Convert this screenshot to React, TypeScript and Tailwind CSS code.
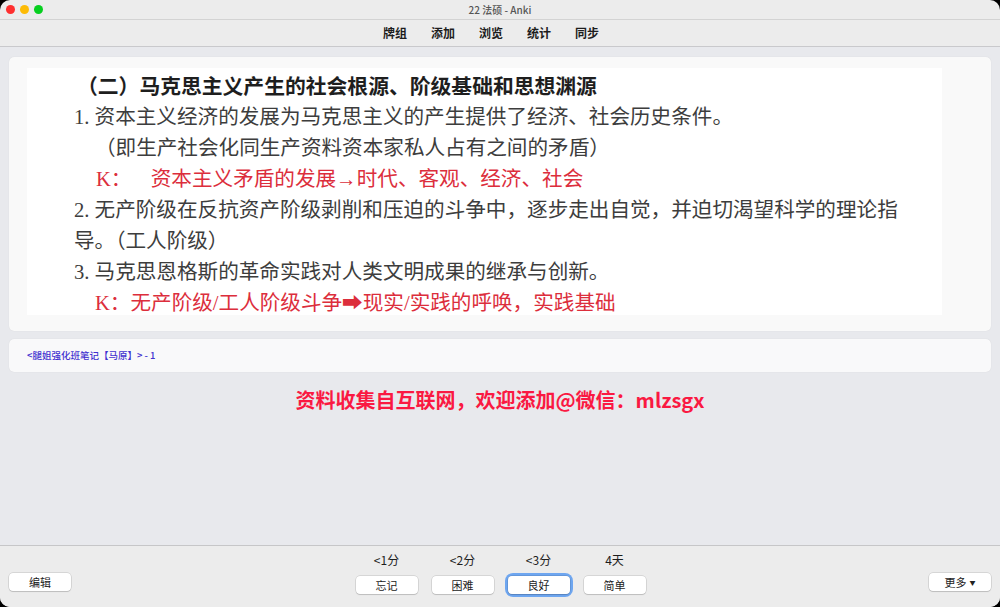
const sans = { fontFamily: '"Noto Sans CJK SC", "Noto Sans", sans-serif' };

const navItems = ["牌组", "添加", "浏览", "统计", "同步"];

const answers = [
  { due: "<1分", label: "忘记" },
  { due: "<2分", label: "困难" },
  { due: "<3分", label: "良好", focused: true },
  { due: "4天", label: "简单" },
];

// the note text, rendered the way the pasted picture shows it
function NoteImage() {
  return (
    <div
      className="bg-white w-[915px] h-[247px] pl-[47px] pt-[3px] text-[20.6px] leading-[31px] text-[#3d3d3d] whitespace-nowrap"
      style={{ fontFamily: '"Liberation Serif", "Noto Sans CJK SC", serif' }}
    >
      <div className="font-bold text-[20.8px] text-[#1e1e1e] ml-[3px]">（二）马克思主义产生的社会根源、阶级基础和思想渊源</div>
      <div>1. 资本主义经济的发展为马克思主义的产生提供了经济、社会历史条件。</div>
      <div className="pl-[21px]">（即生产社会化同生产资料资本家私人占有之间的矛盾）</div>
      <div className="pl-[22px] text-[#dc2e3c]">
        K：　<span className="ml-[9px]">资本主义矛盾的发展→时代、客观、经济、社会</span>
      </div>
      <div>2. 无产阶级在反抗资产阶级剥削和压迫的斗争中，逐步走出自觉，并迫切渴望科学的理论指</div>
      <div>导。（工人阶级）</div>
      <div>3. 马克思恩格斯的革命实践对人类文明成果的继承与创新。</div>
      <div className="pl-[21px] text-[#dc2e3c]">K：无产阶级/工人阶级斗争➡现实/实践的呼唤，实践基础</div>
    </div>
  );
}

function SmallButton({ children, className = "" }: { children: React.ReactNode; className?: string }) {
  return (
    <div
      className={`h-[18px] w-[62px] flex items-center justify-center bg-white rounded-[4px] text-[11px] text-[#222] shadow-[0_0_0_0.5px_rgba(0,0,0,0.18),0_1px_1px_rgba(0,0,0,0.12)] ${className}`}
    >
      {children}
    </div>
  );
}

export default function App() {
  return (
    <div className="w-[1000px] h-[607px] bg-black" style={sans}>
      <div className="w-full h-full rounded-[10px] overflow-hidden bg-[#ececec] flex flex-col">
        {/* title bar */}
        <div className="h-[20px] grid grid-cols-[1fr_auto_1fr] items-center border-b border-[#d3d3d3]">
          <div className="flex items-center gap-[5px] pl-[6px]">
            <span className="w-[9px] h-[9px] rounded-full bg-[#fe2f2f]" />
            <span className="w-[9px] h-[9px] rounded-full bg-[#fdbb05]" />
            <span className="w-[9px] h-[9px] rounded-full bg-[#06cf1f]" />
          </div>
          <div className="text-[10px] font-medium text-[#555]">22 法硕 - Anki</div>
          <div />
        </div>

        {/* toolbar */}
        <div className="h-[27px] flex items-center justify-center gap-[24px] pr-[18px] border-b border-[#c9c9cc]">
          {navItems.map((n) => (
            <span key={n} className="text-[12px] font-bold text-[#1d1d1d]">
              {n}
            </span>
          ))}
        </div>

        {/* review area */}
        <div className="flex-1 bg-[#e8e9ed] px-[9px] pt-[10px] flex flex-col">
          <div className="h-[274px] bg-[#f9f9f9] rounded-[5px] pl-[18px] pt-[11px] shadow-[0_0_1px_rgba(0,0,0,0.12)]">
            <NoteImage />
          </div>
          <div className="mt-[8px] h-[33px] bg-[#f9f9fa] rounded-[5px] pl-[18px] flex items-center shadow-[0_0_1px_rgba(0,0,0,0.12)]">
            <span className="text-[9.5px] font-medium text-[#4232d0]">&lt;腿姐强化班笔记【马原】&gt; - 1</span>
          </div>
          <div className="mt-[15px] text-center text-[20px] font-bold text-[#fa1942] leading-[26px]">
            资料收集自互联网，欢迎添加@微信：mlzsgx
          </div>
        </div>

        {/* answer bar */}
        <div className="h-[62px] border-t border-[#c6c6c8] bg-[#ececec] grid grid-cols-[1fr_auto_1fr] items-end px-[9px]">
          <div className="pb-[16px]">
            <SmallButton>编辑</SmallButton>
          </div>
          <div className="flex gap-[14px] pb-[13px] pl-[1px]">
            {answers.map((a) => (
              <div key={a.label} className="flex flex-col items-center w-[62px]">
                <span className="text-[12px] leading-[14px] text-[#1d1d1d] mb-[9px]">{a.due}</span>
                {a.focused ? (
                  <div className="rounded-[5px] ring-[3px] ring-[#6ea6f0]">
                    <SmallButton>{a.label}</SmallButton>
                  </div>
                ) : (
                  <SmallButton>{a.label}</SmallButton>
                )}
              </div>
            ))}
          </div>
          <div className="pb-[16px] flex justify-end">
            <SmallButton>
              更多
              <span className="ml-[3px] text-[6px]">▼</span>
            </SmallButton>
          </div>
        </div>
      </div>
    </div>
  );
}
